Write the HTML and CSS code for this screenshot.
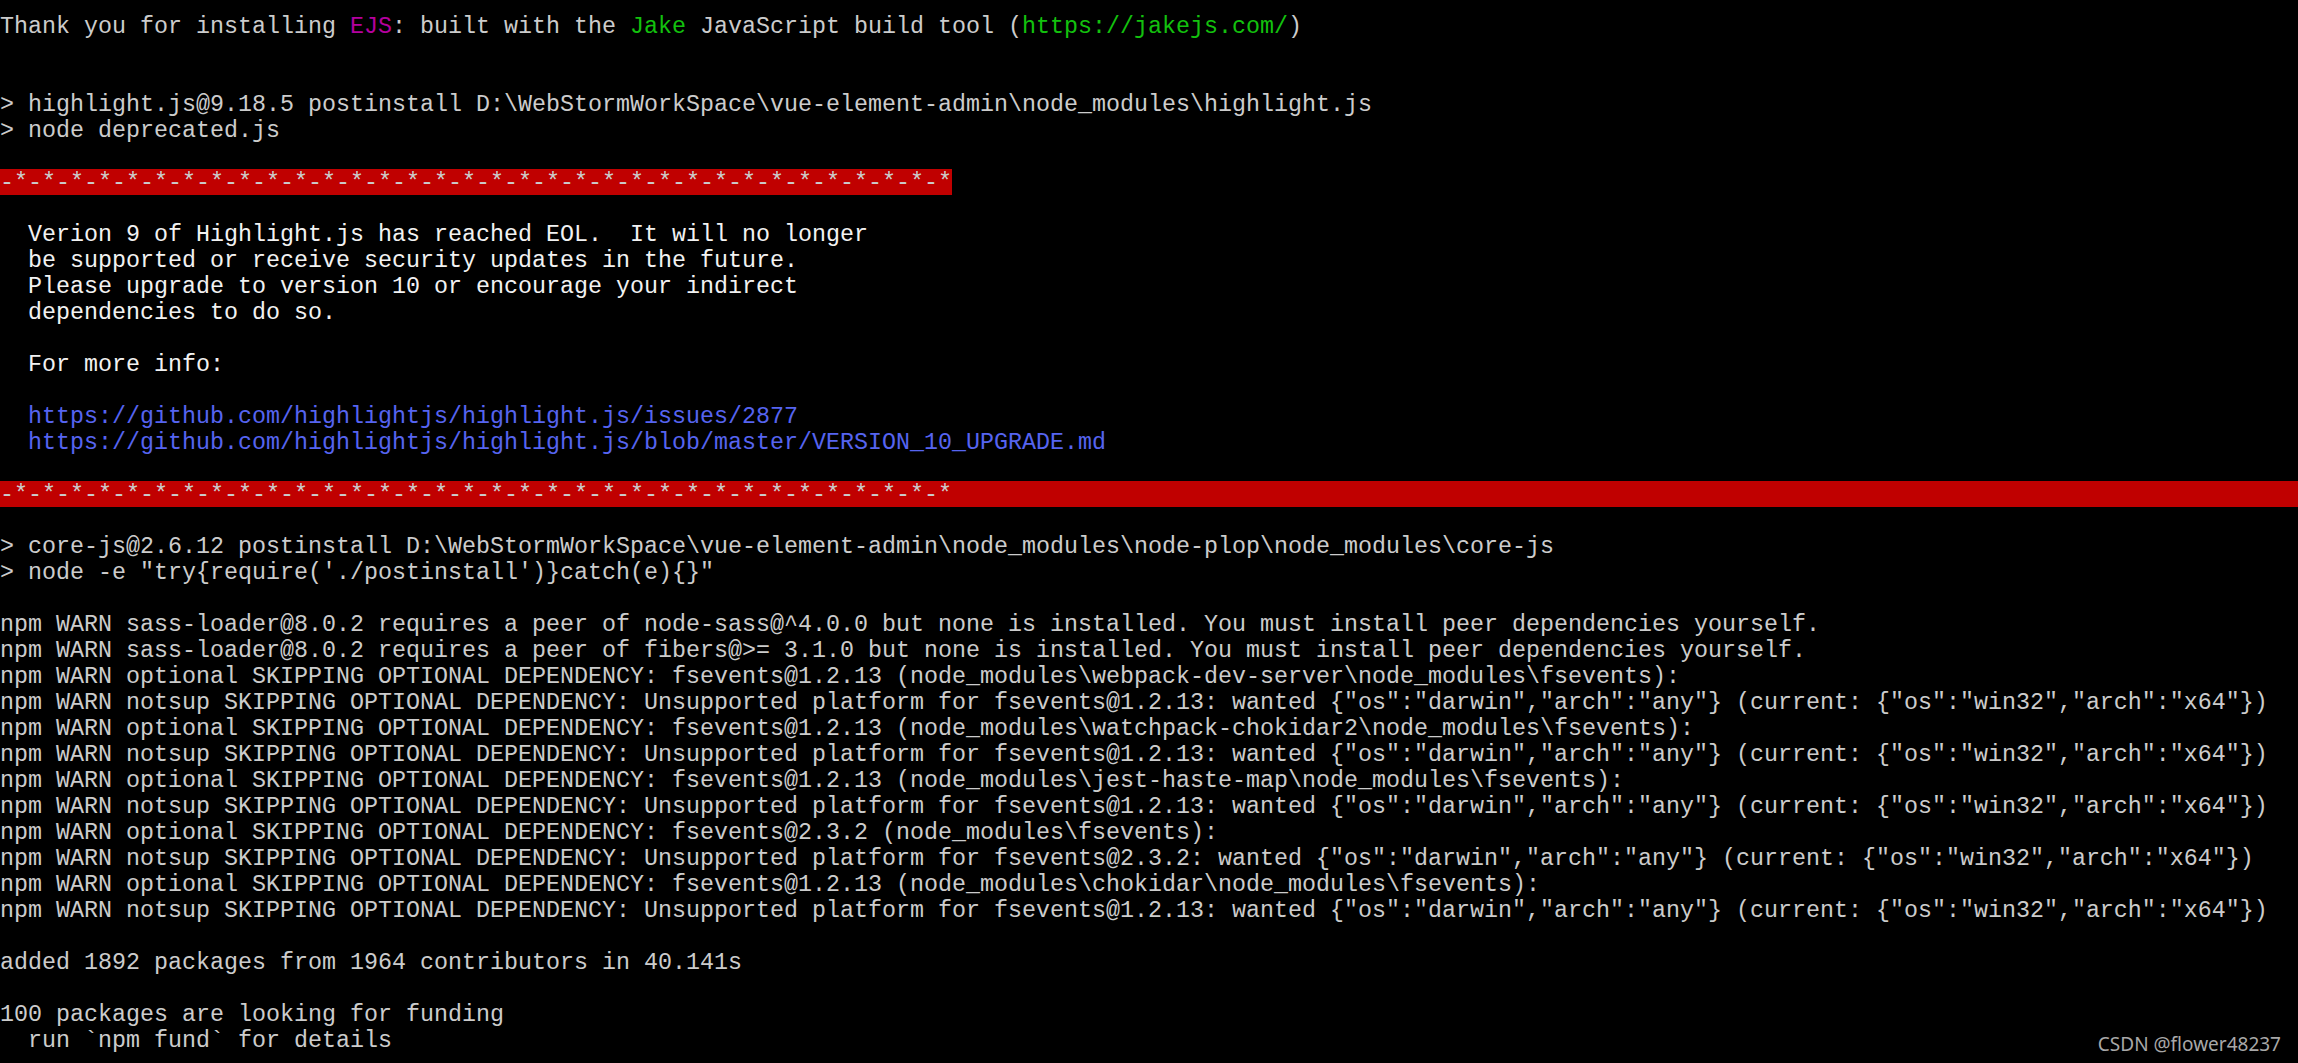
FILE: index.html
```html
<!DOCTYPE html>
<html lang="en">
<head>
<meta charset="utf-8">
<title>npm install output</title>
<link rel="stylesheet" href="styles.css">
</head>
<body>
<main class="console">
<div class="ln">Thank you for installing <span class="mag">EJS</span>: built with the <span class="grn">Jake</span> JavaScript build tool (<span class="grn">https://jakejs.com/</span>)</div>
<div class="ln"></div>
<div class="ln"></div>
<div class="ln">&gt; highlight.js@9.18.5 postinstall D:\WebStormWorkSpace\vue-element-admin\node_modules\highlight.js</div>
<div class="ln">&gt; node deprecated.js</div>
<div class="ln"></div>
<div class="ln barrow"><span class="bar">-*-*-*-*-*-*-*-*-*-*-*-*-*-*-*-*-*-*-*-*-*-*-*-*-*-*-*-*-*-*-*-*-*-*</span></div>
<div class="ln"></div>
<div class="ln wht">  Verion 9 of Highlight.js has reached EOL.  It will no longer</div>
<div class="ln wht">  be supported or receive security updates in the future.</div>
<div class="ln wht">  Please upgrade to version 10 or encourage your indirect</div>
<div class="ln wht">  dependencies to do so.</div>
<div class="ln"></div>
<div class="ln wht">  For more info:</div>
<div class="ln"></div>
<div class="ln blu">  https://github.com/highlightjs/highlight.js/issues/2877</div>
<div class="ln blu">  https://github.com/highlightjs/highlight.js/blob/master/VERSION_10_UPGRADE.md</div>
<div class="ln"></div>
<div class="ln barfull">-*-*-*-*-*-*-*-*-*-*-*-*-*-*-*-*-*-*-*-*-*-*-*-*-*-*-*-*-*-*-*-*-*-*</div>
<div class="ln"></div>
<div class="ln">&gt; core-js@2.6.12 postinstall D:\WebStormWorkSpace\vue-element-admin\node_modules\node-plop\node_modules\core-js</div>
<div class="ln">&gt; node -e "try{require('./postinstall')}catch(e){}"</div>
<div class="ln"></div>
<div class="ln">npm WARN sass-loader@8.0.2 requires a peer of node-sass@^4.0.0 but none is installed. You must install peer dependencies yourself.</div>
<div class="ln">npm WARN sass-loader@8.0.2 requires a peer of fibers@&gt;= 3.1.0 but none is installed. You must install peer dependencies yourself.</div>
<div class="ln">npm WARN optional SKIPPING OPTIONAL DEPENDENCY: fsevents@1.2.13 (node_modules\webpack-dev-server\node_modules\fsevents):</div>
<div class="ln">npm WARN notsup SKIPPING OPTIONAL DEPENDENCY: Unsupported platform for fsevents@1.2.13: wanted {"os":"darwin","arch":"any"} (current: {"os":"win32","arch":"x64"})</div>
<div class="ln">npm WARN optional SKIPPING OPTIONAL DEPENDENCY: fsevents@1.2.13 (node_modules\watchpack-chokidar2\node_modules\fsevents):</div>
<div class="ln">npm WARN notsup SKIPPING OPTIONAL DEPENDENCY: Unsupported platform for fsevents@1.2.13: wanted {"os":"darwin","arch":"any"} (current: {"os":"win32","arch":"x64"})</div>
<div class="ln">npm WARN optional SKIPPING OPTIONAL DEPENDENCY: fsevents@1.2.13 (node_modules\jest-haste-map\node_modules\fsevents):</div>
<div class="ln">npm WARN notsup SKIPPING OPTIONAL DEPENDENCY: Unsupported platform for fsevents@1.2.13: wanted {"os":"darwin","arch":"any"} (current: {"os":"win32","arch":"x64"})</div>
<div class="ln">npm WARN optional SKIPPING OPTIONAL DEPENDENCY: fsevents@2.3.2 (node_modules\fsevents):</div>
<div class="ln">npm WARN notsup SKIPPING OPTIONAL DEPENDENCY: Unsupported platform for fsevents@2.3.2: wanted {"os":"darwin","arch":"any"} (current: {"os":"win32","arch":"x64"})</div>
<div class="ln">npm WARN optional SKIPPING OPTIONAL DEPENDENCY: fsevents@1.2.13 (node_modules\chokidar\node_modules\fsevents):</div>
<div class="ln">npm WARN notsup SKIPPING OPTIONAL DEPENDENCY: Unsupported platform for fsevents@1.2.13: wanted {"os":"darwin","arch":"any"} (current: {"os":"win32","arch":"x64"})</div>
<div class="ln"></div>
<div class="ln">added 1892 packages from 1964 contributors in 40.141s</div>
<div class="ln"></div>
<div class="ln">100 packages are looking for funding</div>
<div class="ln">  run `npm fund` for details</div>
</main>
<div class="watermark">CSDN @flower48237</div>
</body>
</html>
```
FILE: styles.css
```css
html {
  background: #000000;
}
body {
  margin: 0;
  background: #000000;
  min-height: 1063px;
  position: relative;
  overflow: hidden;
}
.console {
  padding-top: 13px;
  font-family: "Liberation Mono", "DejaVu Sans Mono", monospace;
  font-size: 23.33px;
  color: #cccccc;
}
.ln {
  box-sizing: border-box;
  height: 26px;
  padding-top: 3px;
  line-height: 23px;
  white-space: pre;
}
.mag { color: #b4009e; }
.grn { color: #13c10e; }
.wht { color: #f2f2f2; }
.blu { color: #5664f0; }
.ln.barrow {
  padding-top: 0;
}
.bar {
  display: inline-block;
  box-sizing: border-box;
  height: 26px;
  padding-top: 3px;
  line-height: 23px;
  vertical-align: top;
  background: #c00000;
  color: #cccccc;
}
.barfull {
  background: #c00000;
  color: #cccccc;
}
.watermark {
  position: absolute;
  right: 17px;
  bottom: 6px;
  font-family: "Noto Sans", "Open Sans", sans-serif;
  font-size: 19px;
  line-height: 26px;
  color: #a8a8a8;
}
```
